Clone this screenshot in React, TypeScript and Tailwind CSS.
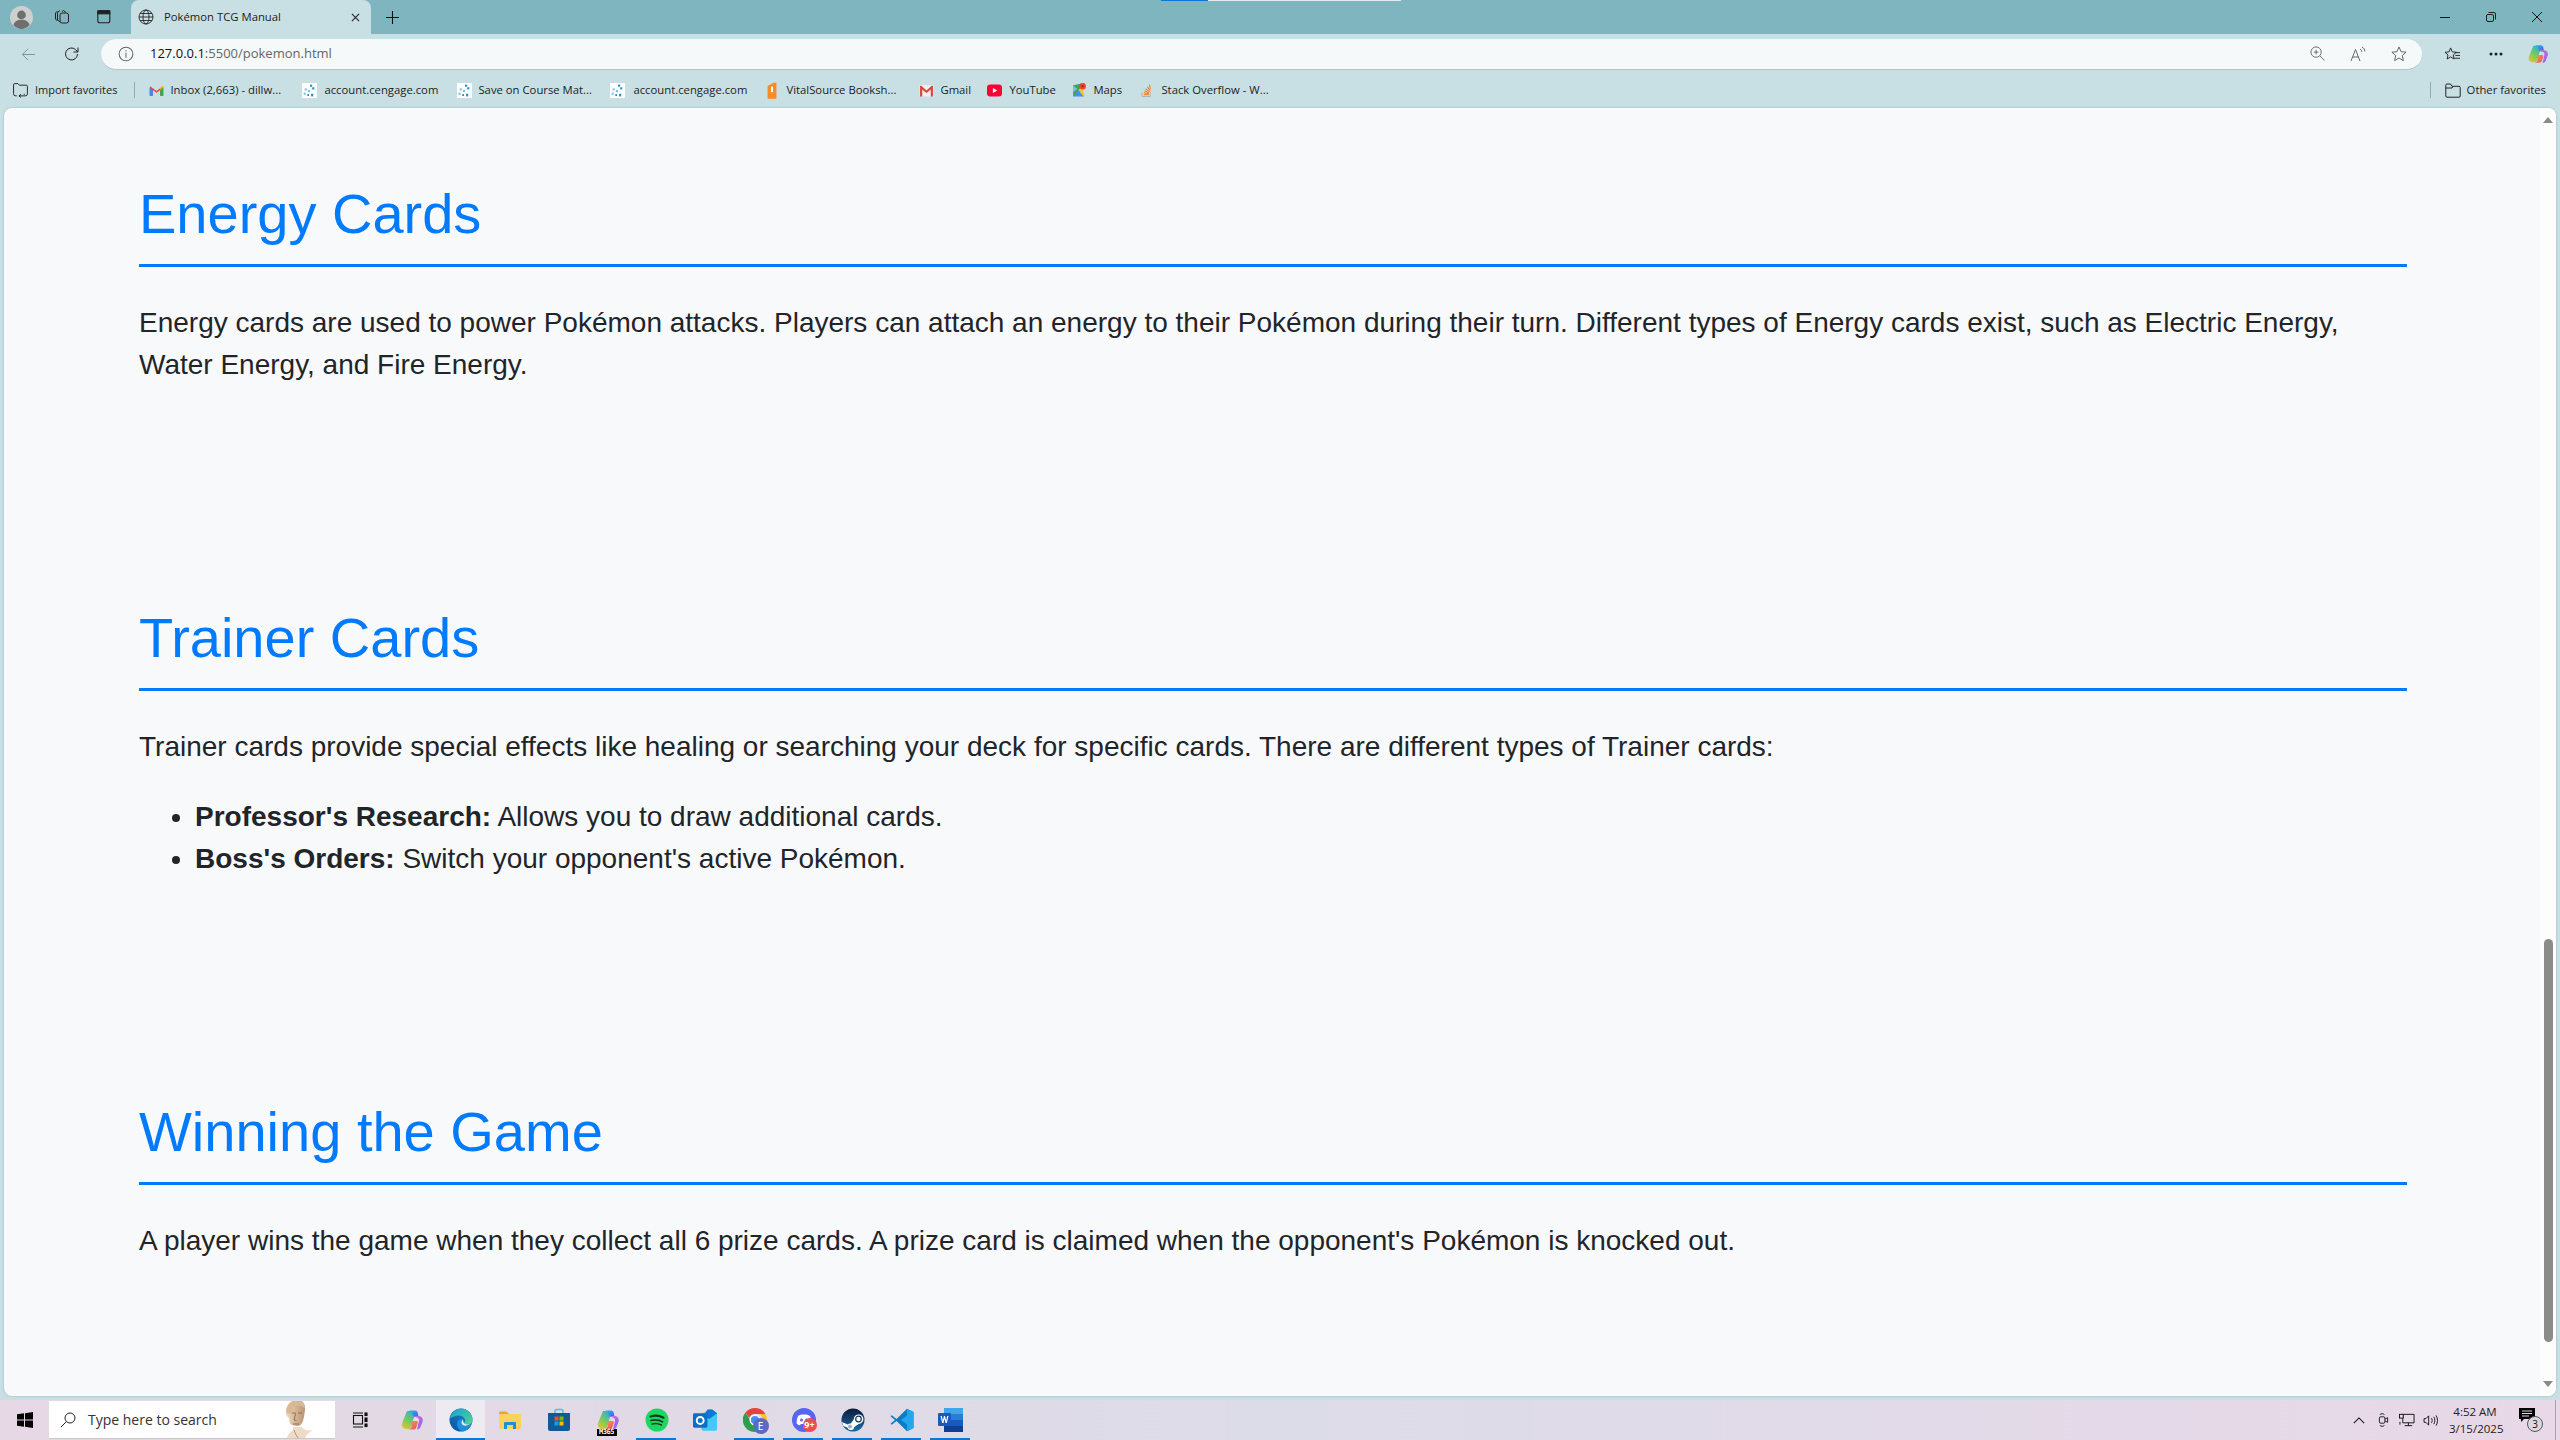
import React from "react";

const ui = "font-['Open_Sans','Noto_Sans',sans-serif]";

function Cengage() {
  return (
    <svg viewBox="0 0 14 14" className="w-[15px] h-[15px] shrink-0 bg-white">
      <g fill="#2a8fc0">
        <rect x="7.5" y="1.5" width="2" height="2" />
        <rect x="9.5" y="4" width="2" height="2" />
        <rect x="2.5" y="5" width="2" height="2" fill="#7cc4dd" />
        <rect x="5.5" y="6.5" width="2" height="2" fill="#7cc4dd" />
        <rect x="1.5" y="9" width="2" height="2" fill="#7cc4dd" />
        <rect x="8.5" y="10" width="2" height="2.5" />
        <rect x="5" y="10.5" width="1.5" height="1.5" fill="#1c5f85" />
      </g>
    </svg>
  );
}
function GmailColor() {
  return (
    <svg viewBox="0 0 14 12" className="w-[15px] h-[13px] shrink-0">
      <path d="M1 11V2l6 4.5L13 2v9h-2.5V5.5L7 8 3.500 5.500V11z" fill="#ea4335" />
      <path d="M0.500 3v8h3V5.500z" fill="#4285f4" />
      <path d="M13.500 3v8h-3V5.500z" fill="#34a853" />
      <path d="M10.500 5.500 13.500 3V1.500L10.500 3z" fill="#fbbc04" />
    </svg>
  );
}
function GmailOld() {
  return (
    <svg viewBox="0 0 14 12" className="w-[15px] h-[13px] shrink-0">
      <rect x="0.500" y="1" width="13" height="10.500" fill="#f2eeee" />
      <path d="M1 11.500V1.500h1.200L7 6l4.800-4.500H13v10h-2V5L7 8.300 3 5v6.500z" fill="#d8453a" />
    </svg>
  );
}
function Youtube() {
  return (
    <svg viewBox="0 0 14 12" className="w-[15px] h-[13px] shrink-0">
      <rect x="0" y="0.500" width="14" height="11" rx="3" fill="#ff0033" />
      <path d="M5.500 3.700v4.600L9.500 6z" fill="#fff" />
    </svg>
  );
}
function Maps() {
  return (
    <svg viewBox="0 0 14 14" className="w-[15px] h-[16px] shrink-0">
      <path d="M1 2.500 9 1v6L1 13z" fill="#38a852" />
      <path d="M1 13 6 7l5 6z" fill="#4a8bf0" />
      <path d="M6 7 9 4l3 9h-1z" fill="#f5c518" />
      <path d="M1 2.500 5 6 1 9z" fill="#7fb8f0" />
      <circle cx="10" cy="3.500" r="3" fill="#e8453c" />
      <circle cx="10" cy="3.500" r="1" fill="#8f1f1a" />
    </svg>
  );
}
function StackOverflow() {
  return (
    <svg viewBox="0 0 12 15" className="w-[11px] h-[15px] shrink-0" fill="none">
      <path d="M1 9.500v4.500h9V9.500" stroke="#b0aaa4" strokeWidth="1" />
      <g stroke="#f48024" strokeWidth="1.200">
        <path d="M3 12h5.500" />
        <path d="M3.200 10l5.400 1" />
        <path d="M3.800 7.800l5 2.300" />
        <path d="M5 5.600l4.300 3.400" />
        <path d="M7 3.400l3 4.400" />
        <path d="M9.200 1.200l1 5" />
      </g>
    </svg>
  );
}
function Vital() {
  return (
    <svg viewBox="0 0 9 15" className="w-[10px] h-[17px] shrink-0">
      <path d="M0.500 3.500 6 0.500h2.500V15H0.500z" fill="#f68b28" />
      <rect x="3.600" y="4" width="1.800" height="5" fill="#fff" />
    </svg>
  );
}
function ImportFav() {
  return (
    <svg viewBox="0 0 15 15" className="w-[17px] h-[16px] shrink-0" fill="none" stroke="#222" strokeWidth=".9">
      <path d="M1 11V2.500a1 1 0 0 1 1-1h3l1.500 1.500H13a1 1 0 0 1 1 1V11" />
      <path d="M1 11a2 2 0 0 0 2 2h1M14 11a2 2 0 0 1-2 2H6.500M8 11.500l-2 1.500 2 1.500M11 11v1" />
    </svg>
  );
}
function Folder() {
  return (
    <svg viewBox="0 0 16 15" className="w-[16px] h-[15px] shrink-0" fill="none" stroke="#222" strokeWidth="1">
      <path d="M.8 3V13a1.200 1.200 0 0 0 1.200 1.200h12a1.200 1.200 0 0 0 1.200-1.200V4.500a1.200 1.200 0 0 0-1.200-1.200H7L5.500 1H2A1.200 1.200 0 0 0 .8 2.200z" />
      <path d="M.8 5H7l1.200-1.600" />
    </svg>
  );
}

function Copilot({ size }: { size: number }) {
  return (
    <svg viewBox="0 0 24 24" width={size} height={size} className="shrink-0">
      <defs>
        <linearGradient id="cpa" x1="0" y1="0" x2="1" y2="1">
          <stop offset="0" stopColor="#35b7e8" />
          <stop offset="1" stopColor="#3b62e0" />
        </linearGradient>
        <linearGradient id="cpb" x1="0" y1="1" x2="0.6" y2="0">
          <stop offset="0" stopColor="#f7c23a" />
          <stop offset="0.5" stopColor="#7fcb55" />
          <stop offset="1" stopColor="#2eb6c9" />
        </linearGradient>
        <linearGradient id="cpc" x1="0" y1="0" x2="1" y2="1">
          <stop offset="0" stopColor="#d86ce0" />
          <stop offset="1" stopColor="#8a66e8" />
        </linearGradient>
        <linearGradient id="cpd" x1="0" y1="0" x2="1" y2="1">
          <stop offset="0" stopColor="#f8a03a" />
          <stop offset="1" stopColor="#ee4d6e" />
        </linearGradient>
      </defs>
      <path d="M7 3h6.500c1.200 0 2 .5 2.400 1.500L13 12l-2 7c-.4 1.300-1.400 2-2.500 2H6c-3 0-5-2.500-4-6z" fill="url(#cpb)" />
      <path d="M9 2.500h6c1.500 0 2.500 1 2.800 2.500L18.500 9H14l-1.500-3C12 4.500 10.500 3 9 2.500z" fill="url(#cpa)" />
      <path d="M13.500 8h5c3 0 5 2.500 4 6l-2 5c-.5 1.500-2 2.500-3.500 2.500l2-9c.3-1.500-1-3-2.500-3z" fill="url(#cpc)" />
      <path d="M11.500 13h5c1 0 1.500 1 1.200 2L16 20c-.4 1-1.500 1.500-2.500 1.500H8c2 0 3-1 3.500-3z" fill="url(#cpd)" />
    </svg>
  );
}

function Edge() {
  return (
    <svg viewBox="0 0 24 24" width="24" height="24">
      <defs>
        <linearGradient id="eg1" x1="0" y1="1" x2="1" y2="0">
          <stop offset="0" stopColor="#0b4f9c" />
          <stop offset="1" stopColor="#1490dc" />
        </linearGradient>
        <linearGradient id="eg2" x1="0" y1="0" x2="1" y2="1">
          <stop offset="0" stopColor="#1aa0d8" />
          <stop offset="1" stopColor="#54d58a" />
        </linearGradient>
      </defs>
      <circle cx="12" cy="12" r="11.500" fill="url(#eg1)" />
      <path d="M1 10.500C2.500 4.800 7 .5 12 .5 18.500.5 23.500 5.500 23.500 12c0 3.300-2.500 5-5.500 5-2 0-3.800-.7-4-1.500 2-1 2.500-2.500 2-4-1-2.500-3.500-4-6-4-3.500 0-7 1.500-9 3z" fill="url(#eg2)" />
      <path d="M14 11.200c-3-.6-6 1.500-6 5 0 3 2 5.600 5 7 4-.5 7.500-3.300 9.500-7.300-2 1.700-4.500 2.300-7 1.600-2.800-.8-3.500-3.500-1.500-6.300z" fill="#1f8fe0" />
      <path d="M14 11.500c-1.800 1.500-2 4.200-.3 5.400 2 1.300 5 1 7.300-.9-2.500 1.100-5.500.5-6.300-1.200-.4-1-.5-2.200-.7-3.300z" fill="#e8f0f6" />
    </svg>
  );
}

function Files() {
  return (
    <svg viewBox="0 0 24 24" width="24" height="24">
      <path d="M1 5a1.500 1.500 0 0 1 1.500-1.500h6L11 6H1z" fill="#e8a825" />
      <path d="M1 6h21a1 1 0 0 1 1 1v13a1 1 0 0 1-1 1H2a1 1 0 0 1-1-1z" fill="#fbd160" />
      <path d="M6 21v-6a1 1 0 0 1 1-1h10a1 1 0 0 1 1 1v6h-3v-4H9v4z" fill="#1f8fd8" />
    </svg>
  );
}
function Store() {
  return (
    <svg viewBox="0 0 24 24" width="24" height="24">
      <path d="M8 5V3a1.500 1.500 0 0 1 1.500-1.500h5A1.500 1.500 0 0 1 16 3v2" fill="none" stroke="#4cc0e8" strokeWidth="1.500" />
      <path d="M1 5h22v16a2 2 0 0 1-2 2H3a2 2 0 0 1-2-2z" fill="#125a96" />
      <rect x="7.500" y="8.500" width="4" height="4" fill="#f25022" />
      <rect x="12.500" y="8.500" width="4" height="4" fill="#7fba00" />
      <rect x="7.500" y="13.500" width="4" height="4" fill="#00a4ef" />
      <rect x="12.500" y="13.500" width="4" height="4" fill="#ffb900" />
    </svg>
  );
}
function Spotify() {
  return (
    <svg viewBox="0 0 24 24" width="24" height="24" fill="none" stroke="#153a20" strokeLinecap="round">
      <circle cx="12" cy="12" r="11.500" fill="#1ed760" stroke="none" />
      <path d="M5.500 8.500c4-1.200 9-1 13 1.200" strokeWidth="2.200" />
      <path d="M6 12.500c3.500-1 8-.7 11.500 1.200" strokeWidth="1.800" />
      <path d="M7 16c3-.8 6.500-.5 9.500 1" strokeWidth="1.500" />
    </svg>
  );
}
function Outlook() {
  return (
    <svg viewBox="0 0 26 24" width="25" height="24">
      <path d="M9 6l8-5h3l5 4v16a2 2 0 0 1-2 2H11a2 2 0 0 1-2-2z" fill="#3fc8f0" />
      <path d="M15 1h5l5 4-8 6-6-3z" fill="#0f78d4" />
      <path d="M9 11l6 4 10-8v14a2 2 0 0 1-2 2H11a2 2 0 0 1-2-2z" fill="#44c8f5" />
      <rect x="0" y="5" width="15" height="15" rx="1.500" fill="#0a6fc9" />
      <circle cx="7.500" cy="12.500" r="3.600" fill="none" stroke="#fff" strokeWidth="2" />
    </svg>
  );
}
function Chrome() {
  return (
    <div className="relative w-[24px] h-[24px]">
      <svg viewBox="0 0 24 24" width="24" height="24">
        <path d="M12 0a12 12 0 0 1 10.400 6H12a6 6 0 0 0-5.700 4L2.500 4.500A12 12 0 0 1 12 0z" fill="#e8433a" />
        <path d="M22.400 6A12 12 0 0 1 12 24l5-8.500a6 6 0 0 0 0-9.500z" fill="#fbc02d" />
        <path d="M2.500 4.500 7 12a6 6 0 0 0 7.500 5.500L12 24A12 12 0 0 1 2.500 4.500z" fill="#2e9e4d" />
        <circle cx="12" cy="12" r="4.800" fill="#4b8df5" stroke="#fff" strokeWidth="1.400" />
      </svg>
      <div className="absolute left-[10px] top-[10px] w-[16px] h-[16px] rounded-full bg-[#5c6bc0] text-white text-[10px] leading-[16px] text-center">E</div>
    </div>
  );
}
function Discord() {
  return (
    <div className="relative w-[24px] h-[24px]">
      <svg viewBox="0 0 24 24" width="24" height="24">
        <circle cx="12" cy="12" r="12" fill="#5865f2" />
        <path d="M6 8c2-1.200 3.500-1.500 6-1.500S16 6.800 18 8c1 2.500 1.500 5 1.500 7.500-1.200 1-2.500 1.500-3.500 1.700l-.8-1.200H8.800L8 17.200c-1-.2-2.300-.7-3.500-1.700C4.500 13 5 10.500 6 8z" fill="#fff" />
        <circle cx="9.500" cy="12" r="1.500" fill="#5865f2" />
        <circle cx="14.500" cy="12" r="1.500" fill="#5865f2" />
      </svg>
      <div className="absolute left-[11px] top-[10px] w-[14px] h-[14px] rounded-full bg-[#ee4d55] text-white font-bold text-[9px] leading-[14px] text-center whitespace-nowrap">9+</div>
    </div>
  );
}
function Steam() {
  return (
    <svg viewBox="0 0 24 24" width="24" height="24">
      <defs>
        <linearGradient id="st" x1="0" y1="0" x2="0" y2="1">
          <stop offset="0" stopColor="#0c1a3c" />
          <stop offset="1" stopColor="#1a6ea8" />
        </linearGradient>
      </defs>
      <circle cx="12" cy="12" r="11.500" fill="url(#st)" />
      <path d="M.8 14l6 2.500a3.500 3.500 0 0 1 3-1l3-4.300a4.800 4.800 0 1 1 4.800 4.800l-4.300 3a3.600 3.600 0 0 1-7 .6L2.500 18z" fill="#fff" />
      <circle cx="17.500" cy="11" r="2.800" fill="none" stroke="#14305a" strokeWidth="1.200" />
      <circle cx="9" cy="18.500" r="2" fill="#9fb0c0" />
    </svg>
  );
}
function VSCode() {
  return (
    <svg viewBox="0 0 24 24" width="24" height="24">
      <path d="M17 0.800 23.500 4v16L17 23.200 6.500 13 1.800 16.800 0.500 15.800 5 12 .5 8.200 1.800 7.200 6.500 11z" fill="#0a7cc4" />
      <path d="M17 .8 23.500 4v16L17 23.200V16.500L11 12l6-4.500z" fill="#23a6ec" />
    </svg>
  );
}
function Word() {
  return (
    <svg viewBox="0 0 25 24" width="25" height="24">
      <rect x="6" y="0" width="19" height="6" fill="#41a5ee" />
      <rect x="6" y="6" width="19" height="6" fill="#2b7cd3" />
      <rect x="6" y="12" width="19" height="6" fill="#185abd" />
      <rect x="6" y="18" width="19" height="6" fill="#103f91" />
      <rect x="0" y="5" width="13" height="13" rx="1" fill="#185abd" />
      <path d="M2.500 8h1.300l1 4.500L6 8h1l1.200 4.500 1-4.500h1.300l-1.700 7H7.500L6.500 10.700 5.500 15H4.200z" fill="#fff" />
    </svg>
  );
}
function Bust() {
  return (
    <svg viewBox="0 0 30 38" width="30" height="38" className="shrink-0">
      <defs>
        <linearGradient id="bu" x1="0" y1="0" x2="1" y2="0">
          <stop offset="0" stopColor="#eed9c0" />
          <stop offset="1" stopColor="#bb9370" />
        </linearGradient>
      </defs>
      <path d="M3 38c1-4 3-6 6-8v-3h9v1c3 2 6 3 11 2-3 2-6 4-8 8z" fill="#ecdcc8" />
      <path d="M6 24l-1-6-3-3c0-3 0-6 1-8 1-4 5-7 10-7s8 3 8 8c0 4-1 9-2 13-1 3-3 5-6 5-3 0-5-1-7-2z" fill="url(#bu)" />
      <path d="M2.500 13c-1-6 3-12 10-12.500 5-.3 8.500 3 8.500 8-2-2-4-3-7-3-2.500 0-4 1-5 2.500l-1 6z" fill="#d8b993" />
      <path d="M8 13h4M14 13h4M11.500 14l-1.500 6 2.500.6M9 24h6" stroke="#8f6d50" strokeWidth="1" fill="none" />
      <path d="M10 30c1 3 2 5 4 8" stroke="#bb9370" strokeWidth="1" fill="none" />
    </svg>
  );
}

type Mark = { w: string; gap: string; icon: React.ReactNode; label: string };
const marks: Mark[] = [
  { w: "w-[153px]", gap: "gap-[6px]", icon: <GmailColor />, label: "Inbox (2,663) - dillw..." },
  { w: "w-[155px]", gap: "gap-[7px]", icon: <Cengage />, label: "account.cengage.com" },
  { w: "w-[153px]", gap: "gap-[6px]", icon: <Cengage />, label: "Save on Course Mat..." },
  { w: "w-[157px]", gap: "gap-[8px]", icon: <Cengage />, label: "account.cengage.com" },
  { w: "w-[152px]", gap: "gap-[9px]", icon: <Vital />, label: "VitalSource Booksh..." },
  { w: "w-[68px]", gap: "gap-[6px]", icon: <GmailOld />, label: "Gmail" },
  { w: "w-[85px]", gap: "gap-[7px]", icon: <Youtube />, label: "YouTube" },
  { w: "w-[69px]", gap: "gap-[6px]", icon: <Maps />, label: "Maps" },
  { w: "w-[130px]", gap: "gap-[9px]", icon: <StackOverflow />, label: "Stack Overflow - W..." },
];

function Tabs() {
  return (
    <div className="relative h-[34px] shrink-0 bg-[#7fb5bf] flex items-center pl-[10px]">
      <div className="absolute left-[1161px] top-0 h-[1px] w-[47px] bg-[#0a78d4]" />
      <div className="absolute left-[1208px] top-0 h-[1px] w-[193px] bg-[#e3ecee]" />
      <svg viewBox="0 0 20 20" className="w-[23px] h-[23px] shrink-0">
        <circle cx="10" cy="10" r="10" fill="#cfcfcf" />
        <circle cx="10" cy="7.800" r="3.800" fill="#6f6f6f" />
        <path d="M3 16.500c1-3.500 4-4.500 7-4.500s6 1 7 4.500A10 10 0 0 1 10 20a10 10 0 0 1-7-3.500z" fill="#6f6f6f" />
      </svg>
      <svg viewBox="0 0 16 16" className="w-[16px] h-[16px] ml-[21px] shrink-0" fill="none" stroke="#222" strokeWidth="1">
        <rect x="6" y="4" width="8.500" height="10" rx="2" />
        <path d="M6 13 3.500 11V3.500L6 1.500M8 2.500 9.500 1.500 12 3.500M3.500 12 1.500 10V4L3.500 2" />
      </svg>
      <svg viewBox="0 0 14 14" className="w-[14px] h-[14px] ml-[27px] shrink-0" fill="none" stroke="#222" strokeWidth="1.100">
        <rect x=".8" y=".8" width="12" height="12" rx="2" />
        <rect x=".8" y=".8" width="12" height="3" fill="#222" />
      </svg>
      <div className="ml-[20px] relative h-[34px] w-[240px] shrink-0 bg-[#c8e0e4] rounded-t-[8px] flex items-center pl-[7px] pr-[11px]">
        <svg viewBox="0 0 16 16" className="w-[16px] h-[16px] shrink-0" fill="none" stroke="#222" strokeWidth=".9">
          <circle cx="8" cy="8" r="7" />
          <ellipse cx="8" cy="8" rx="3" ry="7" />
          <path d="M1 8h14M2 4.500h12M2 11.500h12" />
        </svg>
        <span className={`${ui} ml-[10px] text-[11.300px] text-[#1c1c1c] whitespace-nowrap`}>Pokémon TCG Manual</span>
        <svg viewBox="0 0 10 10" className="ml-auto w-[9px] h-[9px]" fill="none" stroke="#222" strokeWidth="1.200">
          <path d="M1 1l8 8M9 1l-8 8" />
        </svg>
      </div>
      <svg viewBox="0 0 12 12" className="ml-[15px] w-[13px] h-[13px] shrink-0" fill="none" stroke="#111" strokeWidth="1">
        <path d="M6 0v12M0 6h12" />
      </svg>
      <div className="ml-auto flex items-center">
        <div className="w-[46px] flex justify-center">
          <div className="w-[10px] h-[1px] bg-[#111]" />
        </div>
        <div className="w-[46px] flex justify-center">
          <svg viewBox="0 0 10 10" className="w-[10px] h-[10px]" fill="none" stroke="#111" strokeWidth=".9">
            <rect x=".5" y="2.500" width="7" height="7" rx="1.500" />
            <path d="M2.500 .5H8a1.500 1.500 0 0 1 1.500 1.500v5.500" />
          </svg>
        </div>
        <div className="w-[46px] flex justify-center">
          <svg viewBox="0 0 10 10" className="w-[10px] h-[10px]" fill="none" stroke="#111" strokeWidth="1">
            <path d="M0 0l10 10M10 0 0 10" />
          </svg>
        </div>
      </div>
    </div>
  );
}

function Toolbar() {
  return (
    <div className="h-[38px] shrink-0 bg-[#c8e0e4] flex items-center pt-[2px]">
      <svg viewBox="0 0 16 16" className="ml-[20px] w-[17px] h-[15px] shrink-0" fill="none" stroke="#7d8e92" strokeWidth="1">
        <path d="M15 8H1.500M7.500 2 1.500 8l6 6" />
      </svg>
      <svg viewBox="0 0 16 16" className="ml-[27px] w-[16px] h-[16px] shrink-0" fill="none" stroke="#222" strokeWidth="1">
        <path d="M13.500 8a6 6 0 1 1-2-4.500L14 6M14 1.500V6H9.500" />
      </svg>
      <div className="ml-[21px] h-[31px] w-[2321px] shrink-0 bg-[#f5f9fa] rounded-full border-b border-[#b4c4c6] flex items-center">
        <svg viewBox="0 0 14 14" className="ml-[17px] w-[16px] h-[16px] shrink-0" fill="none" stroke="#666" strokeWidth=".9">
          <circle cx="7" cy="7" r="6" />
          <path d="M7 6v4.200M7 3.800v1" />
        </svg>
        <span className={`${ui} ml-[16px] text-[13px] whitespace-nowrap`}>
          <span className="text-[#111]">127.0.0.1</span>
          <span className="text-[#666]">:5500/pokemon.html</span>
        </span>
        <div className="ml-auto flex items-center gap-[25px] pr-[15px]">
          <svg viewBox="0 0 16 16" className="w-[15px] h-[15px]" fill="none" stroke="#666" strokeWidth="1">
            <circle cx="6.500" cy="6.500" r="5.500" />
            <path d="M10.500 10.500 15.500 15.500M6.500 4v5M4 6.500h5" />
          </svg>
          <svg viewBox="0 0 16 16" className="w-[16px] h-[16px]" fill="none" stroke="#666" strokeWidth="1">
            <path d="M1 15 5.500 3.500 10 15M2.800 11h5.400M10 3c1.200.5 1.800 1.500 1.800 2.800M12 1c1.800 1 2.800 2.500 2.800 4.500" />
          </svg>
          <svg viewBox="0 0 16 16" className="w-[16px] h-[16px]" fill="none" stroke="#666" strokeWidth="1">
            <path d="M8 1l2.100 4.700 5 .5-3.800 3.400 1.100 5L8 12l-4.400 2.600 1.100-5L.9 6.200l5-.5z" />
          </svg>
        </div>
      </div>
      <svg viewBox="0 0 18 16" className="ml-[22px] w-[17px] h-[15px] shrink-0" fill="none" stroke="#222" strokeWidth="1">
        <path d="M7 1l1.800 4.200 4.200.4-3.200 2.900.9 4.300L7 10.600 3.300 12.800l.9-4.300L1 5.600l4.200-.4z" fill="none" />
        <path d="M12 6h5M12 9h5M11 12h6" />
      </svg>
      <svg viewBox="0 0 14 4" className="ml-[28px] w-[14px] h-[4px] shrink-0" fill="#222">
        <circle cx="2" cy="2" r="1.500" />
        <circle cx="7" cy="2" r="1.500" />
        <circle cx="12" cy="2" r="1.500" />
      </svg>
      <div className="ml-[24px]">
        <Copilot size={22} />
      </div>
    </div>
  );
}

function Bookmark({ m }: { m: Mark }) {
  return (
    <div className={`${m.w} ${m.gap} shrink-0 flex items-center`}>
      {m.icon}
      <span className={`${ui} text-[11.300px] text-[#222] whitespace-nowrap`}>{m.label}</span>
    </div>
  );
}

function Favorites() {
  return (
    <div className="h-[36px] shrink-0 bg-[#c8e0e4] flex items-center pl-[12px] pr-[14px]">
      <ImportFav />
      <span className={`${ui} ml-[6px] text-[11px] text-[#222] whitespace-nowrap`}>Import favorites</span>
      <div className="ml-[17px] h-[16px] w-px bg-[#98a9ac]" />
      <div className="ml-[14px] flex items-center">
        {marks.map((m, i) => (
          <Bookmark key={i} m={m} />
        ))}
      </div>
      <div className="ml-auto h-[16px] w-px bg-[#98a9ac]" />
      <div className="ml-[14px]">
        <Folder />
      </div>
      <span className={`${ui} ml-[6px] text-[11.300px] text-[#222] whitespace-nowrap`}>Other favorites</span>
    </div>
  );
}

function Scrollbar() {
  return (
    <div className="w-[16px] shrink-0 flex flex-col items-center pt-[9px] pb-[9px] bg-[#fdfdfe]">
      <div className="w-0 h-0 border-x-[5px] border-x-transparent border-b-[6px] border-b-[#8a8a8a]" />
      <div className="flex-1 w-full flex flex-col justify-end pb-[39px] items-center">
        <div className="w-[9px] h-[403px] rounded-full bg-[#8b8b8b]" />
      </div>
      <div className="w-0 h-0 border-x-[5px] border-x-transparent border-t-[6px] border-t-[#8a8a8a]" />
    </div>
  );
}

const h2 = "font-['Liberation_Sans',Arial,sans-serif] text-[56px] leading-[67px] text-[#007bff] pb-[17px] border-b-[3px] border-[#007bff] mb-[35px] font-normal";
const para = "text-[28px] leading-[42px] text-[#212529]";

function Page() {
  return (
    <div className="flex-1 min-w-0 overflow-hidden pl-[135px] pr-[133px] pt-[72px] font-['Liberation_Sans',Arial,sans-serif]">
      <section className="h-[424px]">
        <h2 className={h2}>Energy Cards</h2>
        <p className={para}>
          Energy cards are used to power Pokémon attacks. Players can attach an energy to their Pokémon during their turn. Different types of Energy cards exist, such as Electric Energy, Water Energy, and Fire Energy.
        </p>
      </section>
      <section className="h-[494px]">
        <h2 className={h2}>Trainer Cards</h2>
        <p className={`${para} mb-[28px]`}>
          Trainer cards provide special effects like healing or searching your deck for specific cards. There are different types of Trainer cards:
        </p>
        <ul className="list-disc pl-[56px]">
          <li className={para}>
            <strong className="font-bold">Professor's Research:</strong> Allows you to draw additional cards.
          </li>
          <li className={para}>
            <strong className="font-bold">Boss's Orders:</strong> Switch your opponent's active Pokémon.
          </li>
        </ul>
      </section>
      <section>
        <h2 className={h2}>Winning the Game</h2>
        <p className={para}>
          A player wins the game when they collect all 6 prize cards. A prize card is claimed when the opponent's Pokémon is knocked out.
        </p>
      </section>
    </div>
  );
}

function TaskIcon({ children, state }: { children: React.ReactNode; state?: "active" | "open" }) {
  return (
    <div className={`relative w-[49px] h-[40px] shrink-0 flex items-center justify-center ${state === "active" ? "bg-[#eeeaf2]" : ""}`}>
      {children}
      {state === "active" && <div className="absolute left-0 right-0 bottom-0 h-[2px] bg-[#0a78d4]" />}
      {state === "open" && <div className="absolute left-[4px] right-[5px] bottom-0 h-[2px] bg-[#0a78d4]" />}
    </div>
  );
}

function Taskbar() {
  return (
    <div className="h-[40px] shrink-0 flex items-center bg-gradient-to-r from-[#e6d8e4] via-[#dcdce8] to-[#e8d8e8]">
      <div className="w-[49px] h-[40px] shrink-0 flex items-center justify-center">
        <svg viewBox="0 0 16 16" className="w-[16px] h-[16px]" fill="#000">
          <path d="M0 2.300 7 1.300V7.500H0zM8 1.200 16 0V7.500H8zM0 8.500H7V14.700L0 13.700zM8 8.500H16V16L8 14.800z" />
        </svg>
      </div>
      <div className="w-[286px] h-[38px] shrink-0 bg-white border-b border-[#c8c8c8] flex items-center overflow-hidden">
        <svg viewBox="0 0 16 16" className="ml-[11px] w-[16px] h-[16px] shrink-0" fill="none" stroke="#222" strokeWidth="1">
          <circle cx="10" cy="6" r="5" />
          <path d="M6.500 9.500.8 15.200" />
        </svg>
        <span className={`${ui} ml-[12px] text-[14px] text-[#333] whitespace-nowrap`}>Type here to search</span>
        <div className="ml-auto mr-[21px] self-end">
          <Bust />
        </div>
      </div>
      <div className="w-[3px] shrink-0" />
      <TaskIcon>
        <svg viewBox="0 0 16 16" className="w-[16px] h-[16px] -ml-[6px]" fill="none" stroke="#111" strokeWidth="1.100">
          <rect x="1.500" y="3.500" width="9" height="8.500" />
          <path d="M1 1h10M1 15h10" />
          <rect x="13" y="1" width="2" height="2.500" fill="#111" />
          <rect x="13" y="6" width="2" height="3.500" fill="#111" />
          <rect x="13" y="12" width="2" height="2.500" fill="#111" />
        </svg>
      </TaskIcon>
      <TaskIcon>
        <Copilot size={24} />
      </TaskIcon>
      <TaskIcon state="active">
        <Edge />
      </TaskIcon>
      <TaskIcon>
        <Files />
      </TaskIcon>
      <TaskIcon>
        <Store />
      </TaskIcon>
      <TaskIcon>
        <div className="relative w-[24px] h-[24px]">
          <Copilot size={24} />
          <div className="absolute left-[1px] bottom-[-4px] w-[20px] h-[7px] bg-black text-white text-[7px] leading-[7px] font-bold text-center font-['DejaVu_Sans_Mono',monospace] tracking-[-0.5px]">M365</div>
        </div>
      </TaskIcon>
      <TaskIcon state="open">
        <Spotify />
      </TaskIcon>
      <TaskIcon>
        <Outlook />
      </TaskIcon>
      <TaskIcon state="open">
        <Chrome />
      </TaskIcon>
      <TaskIcon state="open">
        <Discord />
      </TaskIcon>
      <TaskIcon state="open">
        <Steam />
      </TaskIcon>
      <TaskIcon state="open">
        <VSCode />
      </TaskIcon>
      <TaskIcon state="open">
        <Word />
      </TaskIcon>
      <div className="ml-auto flex items-center h-[40px] pr-[4px]">
        <svg viewBox="0 0 14 8" className="w-[12px] h-[7px]" fill="none" stroke="#111" strokeWidth="1.200">
          <path d="M1 7l6-6 6 6" />
        </svg>
        <svg viewBox="0 0 12 16" className="ml-[13px] w-[11px] h-[16px]" fill="none" stroke="#111" strokeWidth="1">
          <rect x="1.500" y="4.500" width="6" height="7" rx="1.500" />
          <path d="M7.500 7l3-1.500v5l-3-1.500M2 2c1-1 4-1 5 0M2 14c1 1 4 1 5 0" />
        </svg>
        <svg viewBox="0 0 17 14" className="ml-[10px] w-[16px] h-[14px]" fill="none" stroke="#111" strokeWidth="1">
          <path d="M4 1h12v9H4zM10 10v3M6 13h8" />
          <rect x=".5" y="1" width="4" height="4" fill="#e6d8e4" />
          <path d="M1 9v3" />
        </svg>
        <svg viewBox="0 0 17 14" className="ml-[8px] w-[16px] h-[13px]" fill="none" stroke="#111" strokeWidth="1">
          <path d="M1 5v4h2l3 3V2L3 5zM9 4.500c1 1.500 1 3.500 0 5M11.500 3c1.500 2.500 1.500 5.500 0 8M14 1.500c2 3.500 2 7.500 0 11" />
        </svg>
        <div className={`${ui} ml-[10px] w-[52px] text-center text-[#222] text-[11.500px] leading-[17px] whitespace-nowrap`}>
          <div>4:52 AM</div>
          <div>3/15/2025</div>
        </div>
        <div className="ml-[18px] relative w-[24px] h-[26px]">
          <svg viewBox="0 0 16 16" className="w-[16px] h-[16px] mt-[1px]" fill="#000">
            <path d="M0 0h16v11H5l-3 3v-3H0z" />
            <path d="M3 3h10M3 5.500h10M3 8h7" stroke="#e6d8e4" strokeWidth="1" />
          </svg>
          <div className={`${ui} absolute left-[8px] top-[9px] w-[16px] h-[16px] rounded-full bg-[#dcd8e0] border border-[#555] text-[#111] text-[10px] leading-[14px] text-center`}>3</div>
        </div>
        <div className="ml-[12px] h-[40px] w-px bg-[#a9a4ac]" />
      </div>
    </div>
  );
}

export default function App() {
  return (
    <div className="w-[2560px] h-[1440px] overflow-hidden flex flex-col bg-[#c8e0e4]">
      <Tabs />
      <Toolbar />
      <Favorites />
      <div className="flex-1 min-h-0 flex ml-[4px] mr-[4px] mb-[4px] bg-[#f8f9fa] rounded-[8px] overflow-hidden shadow-[0_0_2px_rgba(90,120,125,0.5)]">
        <Page />
        <Scrollbar />
      </div>
      <Taskbar />
    </div>
  );
}
